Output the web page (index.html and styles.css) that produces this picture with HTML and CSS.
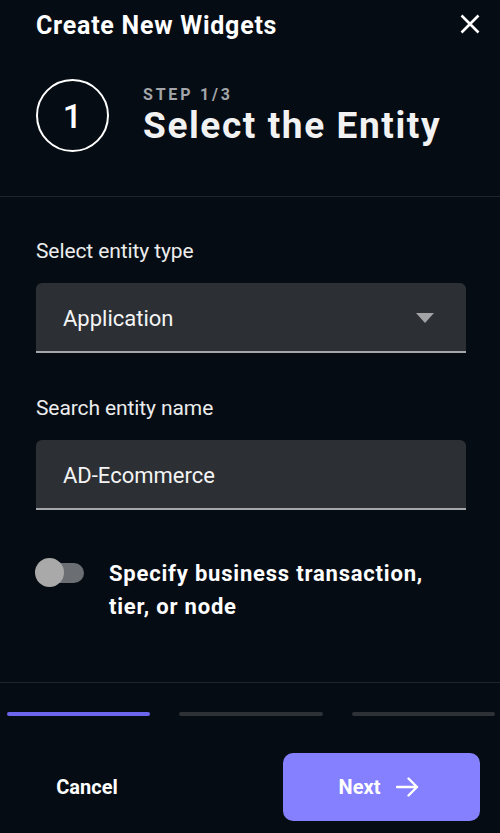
FILE: index.html
```html
<!DOCTYPE html>
<html lang="en">
<head>
    <meta charset="UTF-8">
    <meta name="viewport" content="width=device-width, initial-scale=1.0">
    <title>Create New Widgets</title>
    <link rel="stylesheet" href="styles.css">
</head>
<body>
    <div class="sheet">
        <div class="header">
            <h1 class="title">Create New Widgets</h1>
            <button class="close" aria-label="Close">
                <svg width="20" height="20" viewBox="0 0 20 20">
                    <path d="M1.5 1.5 L18.5 18.5 M18.5 1.5 L1.5 18.5" stroke="#fff" stroke-width="2.6" stroke-linecap="butt"/>
                </svg>
            </button>
        </div>

        <div class="step">
            <div class="step-num">1</div>
            <div class="step-text">
                <div class="step-label">STEP 1/3</div>
                <div class="step-title">Select the Entity</div>
            </div>
        </div>

        <div class="divider top-divider"></div>

        <div class="form">
            <label class="field-label">Select entity type</label>
            <div class="field">
                <span>Application</span>
                <span class="caret"></span>
            </div>

            <label class="field-label">Search entity name</label>
            <div class="field">
                <span>AD-Ecommerce</span>
            </div>

            <div class="toggle-row">
                <div class="toggle">
                    <div class="knob"></div>
                </div>
                <div class="toggle-text">Specify business transaction, tier, or node</div>
            </div>
        </div>

        <div class="divider bottom-divider"></div>

        <div class="progress">
            <div class="bar active"></div>
            <div class="bar"></div>
            <div class="bar"></div>
        </div>

        <div class="footer">
            <button class="cancel">Cancel</button>
            <button class="next">
                Next
                <svg width="24" height="20" viewBox="0 0 24 20">
                    <path d="M1 10 H21 M12.5 1.5 L21 10 L12.5 18.5" fill="none" stroke="#fff" stroke-width="2.4" stroke-linecap="round" stroke-linejoin="round"/>
                </svg>
            </button>
        </div>
    </div>
</body>
</html>
```

FILE: styles.css
```css
* {
    box-sizing: border-box;
}

body {
    margin: 0;
    background-color: #060c14;
    color: #fff;
    font-family: Roboto, "Liberation Sans", sans-serif;
}

.sheet {
    width: 500px;
    height: 833px;
    display: flex;
    flex-direction: column;
}

/* header */
.header {
    display: flex;
    justify-content: space-between;
    align-items: center;
    padding: 10px 20px 0 36px;
}

.title {
    margin: 0;
    font-size: 25px;
    font-weight: 700;
    line-height: 32px;
    letter-spacing: 0.75px;
}

.close {
    background: none;
    border: none;
    padding: 0;
    width: 20px;
    height: 20px;
    margin-top: -4px;
}

/* step */
.step {
    display: flex;
    align-items: center;
    gap: 34px;
    padding: 0 36px;
    margin-top: 37px;
}

.step-num {
    width: 73px;
    height: 73px;
    border: 2px solid #fff;
    border-radius: 50%;
    display: flex;
    justify-content: center;
    align-items: center;
    font-size: 34px;
    font-weight: 500;
    flex-shrink: 0;
}

.step-label {
    color: #a3a5a8;
    font-size: 16px;
    font-weight: 700;
    letter-spacing: 2.8px;
    line-height: 20px;
}

.step-title {
    font-size: 37px;
    font-weight: 700;
    line-height: 42px;
    letter-spacing: 1.6px;
    color: #f2f2f2;
}

.divider {
    height: 1px;
    background-color: #1f252c;
}

.top-divider {
    margin-top: 44px;
}

.bottom-divider {
    margin-top: 59px;
}

/* form */
.form {
    display: flex;
    flex-direction: column;
    padding: 42px 34px 0 36px;
}

.field-label {
    font-size: 21px;
    line-height: 24px;
    letter-spacing: -0.1px;
    color: #ececec;
}

.field {
    margin-top: 20px;
    margin-bottom: 43px;
    height: 70px;
    background-color: #2c3035;
    border-radius: 6px 6px 0 0;
    border-bottom: 2px solid #a5a7aa;
    display: flex;
    align-items: center;
    justify-content: space-between;
    padding: 2px 32px 0 27px;
    font-size: 22px;
    color: #f4f4f4;
}

.caret {
    width: 0;
    height: 0;
    border-left: 9.5px solid transparent;
    border-right: 9.5px solid transparent;
    border-top: 10px solid #a2a3a5;
}

/* toggle */
.toggle-row {
    display: flex;
    align-items: flex-start;
    gap: 25px;
    margin-top: 4px;
}

.toggle {
    position: relative;
    width: 48px;
    height: 20px;
    border-radius: 10px;
    background-color: #6b6f73;
    margin-top: 6px;
    flex-shrink: 0;
}

.knob {
    position: absolute;
    left: -1px;
    top: -5px;
    width: 29px;
    height: 29px;
    border-radius: 50%;
    background-color: #a9a9a9;
}

.toggle-text {
    font-size: 22px;
    font-weight: 700;
    line-height: 33px;
    letter-spacing: 0.8px;
    width: 340px;
}

/* progress */
.progress {
    display: flex;
    gap: 29px;
    padding: 0 5px 0 7px;
    margin-top: 29px;
}

.bar {
    flex: 1;
    height: 4px;
    border-radius: 2px;
    background-color: #2e3237;
}

.bar.active {
    background-color: #6c66ec;
}

/* footer */
.footer {
    display: flex;
    justify-content: space-between;
    align-items: center;
    padding: 0 20px;
    margin-top: 37px;
}

.cancel {
    background: none;
    border: none;
    color: #fff;
    font-family: inherit;
    font-size: 20px;
    font-weight: 700;
    width: 134px;
    height: 68px;
}

.next {
    display: flex;
    align-items: center;
    justify-content: center;
    gap: 16px;
    width: 197px;
    height: 68px;
    border: none;
    border-radius: 10px;
    background-color: #8480ff;
    color: #fff;
    font-family: inherit;
    font-size: 20px;
    font-weight: 700;
    padding: 0 4px 0 0;
}
```
